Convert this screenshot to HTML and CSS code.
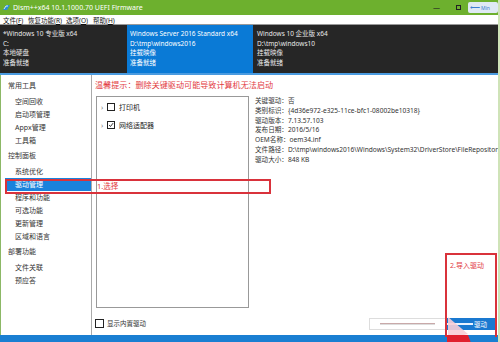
FILE: index.html
```html
<!DOCTYPE html>
<html lang="zh">
<head>
<meta charset="utf-8">
<title>Dism++</title>
<link rel="stylesheet" href="styles.css">
</head>
<body>
<div class="window">
  <div class="titlebar">
    <svg class="appicon" width="9" height="9" viewBox="0 0 9 9"><path d="M1 7 L4 2 L8 2 L5 7 Z" fill="#2a8fd8"/><path d="M2 6 L4 3 L6 3" stroke="#fff" stroke-width="0.8" fill="none"/></svg>
    <span class="title">Dism++x64 10.1.1000.70 UEFI Firmware</span>
    <span class="ctl min">—</span>
    <span class="ctl max"></span>
    <span class="float"><span class="swoosh">⟵</span>Min</span>
  </div>
  <div class="menubar">
    <span>文件(<u>F</u>)</span>
    <span>恢复功能(<u>R</u>)</span>
    <span>选项(<u>O</u>)</span>
    <span>帮助(<u>H</u>)</span>
  </div>
  <div class="images">
    <div class="img">
      <div>*Windows 10 专业版 x64</div>
      <div>C:</div>
      <div>本地硬盘</div>
      <div>准备就绪</div>
    </div>
    <div class="img sel">
      <div>Windows Server 2016 Standard x64</div>
      <div>D:\tmp\windows2016</div>
      <div>挂载映像</div>
      <div>准备就绪</div>
    </div>
    <div class="img last">
      <div>Windows 10 企业版 x64</div>
      <div>D:\tmp\windows10</div>
      <div>挂载映像</div>
      <div>准备就绪</div>
    </div>
  </div>
  <div class="body">
    <div class="sidebar">
      <div class="group first">常用工具</div>
      <div class="item">空间回收</div>
      <div class="item">启动项管理</div>
      <div class="item">Appx管理</div>
      <div class="item">工具箱</div>
      <div class="group">控制面板</div>
      <div class="item">系统优化</div>
      <div class="item active">驱动管理</div>
      <div class="item">程序和功能</div>
      <div class="item">可选功能</div>
      <div class="item">更新管理</div>
      <div class="item">区域和语言</div>
      <div class="group">部署功能</div>
      <div class="item">文件关联</div>
      <div class="item">预应答</div>
    </div>
    <div class="main">
      <div class="warn">温馨提示：删除关键驱动可能导致计算机无法启动</div>
      <div class="content">
        <div class="tree">
          <div class="node"><span class="arrow">›</span><span class="cb"></span><span>打印机</span></div>
          <div class="node"><span class="arrow">›</span><span class="cb checked"><svg width="8" height="8" viewBox="0 0 8 8"><path d="M1.5 4 L3.3 6 L6.8 1.5" stroke="#222" stroke-width="1.2" fill="none"/></svg></span><span>网络适配器</span></div>
        </div>
        <div class="details">
          <div>关键驱动：否</div>
          <div>类别标识：{4d36e972-e325-11ce-bfc1-08002be10318}</div>
          <div>驱动版本：7.13.57.103</div>
          <div>发布日期：2016/5/16</div>
          <div>OEM名称：oem34.inf</div>
          <div>文件路径：D:\tmp\windows2016\Windows\System32\DriverStore\FileRepository</div>
          <div>驱动大小：848 KB</div>
        </div>
      </div>
      <div class="bottom">
        <label class="show"><span class="cb"></span>显示内置驱动</label>
        <div class="actions">
          <div class="progress"><span class="line"></span></div>
          <div class="btn"><span class="line light"></span>驱动</div>
        </div>
      </div>
    </div>
  </div>
  <div class="statusbar"></div>

  <div class="mark mark1"></div>
  <div class="note note1">1.选择</div>
  <div class="mark mark2"><span class="note2">2.导入驱动</span></div>
  <svg class="cursor" width="30" height="26" viewBox="0 0 30 26"><polygon points="2,0 22,17 2,22" fill="rgba(248,205,214,0.9)"/><polygon points="1,18 22,18 25,26 1,26" fill="#e0202e"/></svg>
</div>
</body>
</html>
```
FILE: styles.css
```css
* { box-sizing: border-box; }
html, body { margin: 0; padding: 0; }
body {
  width: 500px; height: 342px; overflow: hidden;
  font-family: "Noto Sans", "Noto Sans CJK SC", sans-serif;
  font-size: 7px; color: #333; background: #fff;
}
.window {
  position: relative; width: 500px; height: 342px;
  display: flex; flex-direction: column;
  border-right: 2px solid #cfe3b8;
}
.titlebar {
  height: 15px; flex: none; background: #6db02e;
  display: flex; align-items: center; padding-left: 2px; color: #fff;
}
.appicon { margin-right: 2px; }
.title { font-size: 7px; line-height: 15px; flex: 1; }
.ctl { color: #222; font-size: 7px; }
.min { margin-right: 16px; }
.max { width: 5px; height: 5px; border: 1px solid #222; margin-right: 7px; }
.float {
  width: 30px; height: 11px; background: #dfe9f4; color: #3b7fd0;
  border-radius: 2px; font-size: 5px; line-height: 11px; padding-left: 2px; white-space: nowrap; overflow: hidden;
}
.swoosh { font-size: 7px; margin-right: 1px; }
.menubar {
  height: 10px; flex: none; background: #fff; border-bottom: 1px solid #999;
  display: flex; align-items: center; font-size: 6.5px; color: #111; padding-left: 3px;
}
.menubar span:nth-child(1) { width: 25px; }
.menubar span:nth-child(2) { width: 38px; }
.menubar span:nth-child(3) { width: 27px; }
.images {
  height: 50px; flex: none; display: grid; grid-template-columns: 127px 125px 1fr;
  background: #262626; border-bottom: 2px solid #4a9be0;
}
.img { padding: 4px 3px 0; color: #e8e8e8; font-size: 6.5px; line-height: 9.5px; white-space: nowrap; overflow: hidden; }
.img.sel { background: #0a7ad6; color: #fff; }
.img.last { border-left: 1px solid #0a7ad6; padding-left: 4px; }
.body { flex: 1; display: flex; min-height: 0; }
.sidebar {
  width: 92px; flex: none; border-right: 1px solid #aaa; padding-top: 4px;
  border-left: 1px solid #8cb866;
}
.group { height: 16px; line-height: 13px; padding-left: 7px; color: #333; margin-top: 2px; }
.group.first { margin-top: 0; }
.item { height: 13px; line-height: 13px; padding-left: 14px; color: #333; }
.item.active { background: #1a82dc; color: #fff; margin-left: 4px; padding-left: 10px; }
.main { flex: 1; display: flex; flex-direction: column; padding: 4px 0 0 3px; min-width: 0; }
.warn { color: #e23a3f; font-size: 8.1px; line-height: 12px; height: 17px; white-space: nowrap; }
.content { height: 212px; display: flex; }
.tree {
  width: 153px; flex: none; margin-left: 1px; border: 1px solid #999; padding-top: 1px;
}
.node { display: flex; align-items: center; height: 18px; font-size: 7px; color: #222; }
.arrow { width: 10px; text-align: center; color: #777; font-size: 7px; }
.cb {
  width: 8px; height: 8px; border: 1px solid #222; display: inline-flex;
  align-items: center; justify-content: center; margin-right: 4px; background: #fff;
}
.details { padding: 0 0 0 6px; font-size: 6.6px; line-height: 9.8px; white-space: nowrap; overflow: hidden; color: #333; }
.bottom { flex: 1; display: flex; align-items: center; justify-content: space-between; padding-top: 3px; }
.show { display: flex; align-items: center; font-size: 6.5px; color: #333; }
.show .cb { width: 9px; height: 9px; margin-right: 3px; }
.actions { display: flex; align-items: stretch; height: 12px; margin-right: 3px; margin-top: 2px; }
.progress { width: 77px; border: 1px solid #ddd; display: flex; align-items: center; justify-content: center; }
.line { display: inline-block; width: 55px; height: 2px; border-top: 1px solid #c9a9a9; border-bottom: 1px solid #ddd; }
.line.light { width: 26px; border-color: #eaf3ff; margin-right: 1px; }
.btn { width: 49px; background: #1a79d0; color: #fff; font-size: 6.5px; display: flex; align-items: center; justify-content: flex-end; padding-right: 8px; }
.statusbar { height: 7px; flex: none; background: #1a7fd2; }
.mark { position: absolute; border: 2px solid #d9323b; }
.mark1 { left: 5px; top: 179px; width: 266px; height: 15px; }
.note1 { position: absolute; left: 97px; top: 181px; color: #e23a3f; font-size: 7.5px; line-height: 10px; }
.mark2 { left: 445px; top: 253px; width: 52px; height: 84px; border-bottom: none; }
.note2 { position: absolute; left: 3px; top: 5px; color: #e23a3f; font-size: 7px; white-space: nowrap; }
.cursor { position: absolute; left: 446px; top: 317px; }
```
